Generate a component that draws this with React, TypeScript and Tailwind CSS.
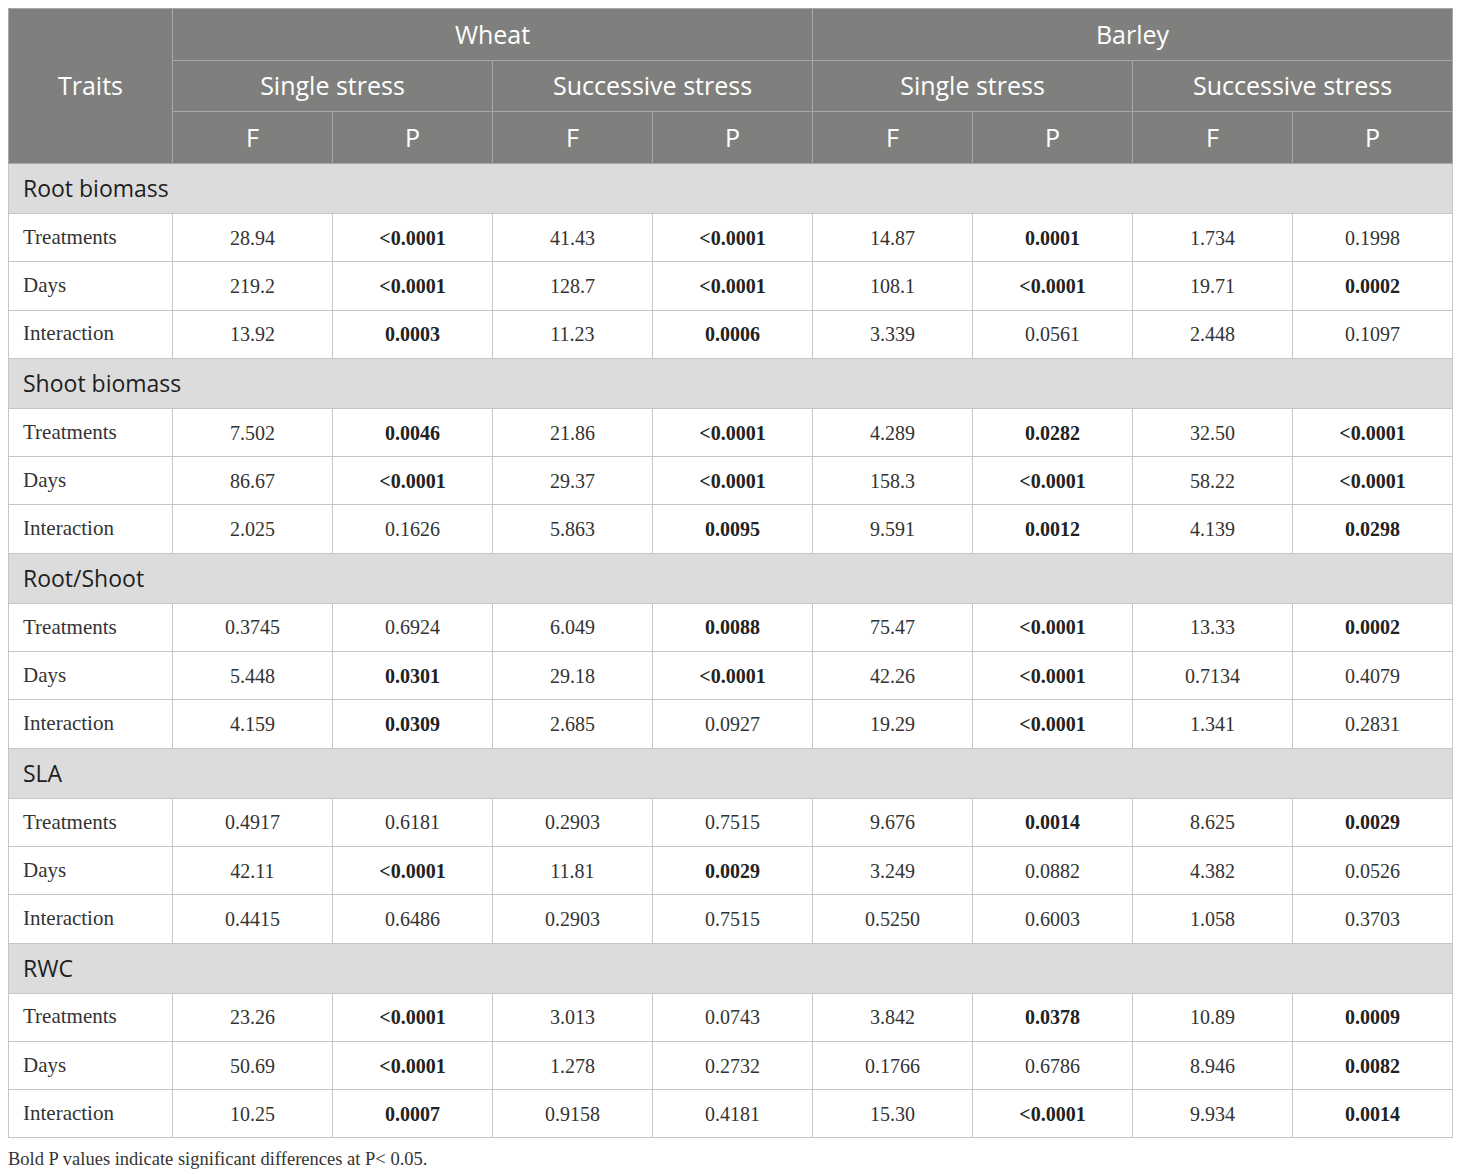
type Row = { label: string; values: string[]; bold: boolean[] };
type Section = { title: string; rows: Row[] };

function mk(label: string, raw: string[]): Row {
  return {
    label,
    values: raw.map((v) => v.replace('*', '')),
    bold: raw.map((v) => v.startsWith('*')),
  };
}

const sections: Section[] = [
  {
    title: 'Root biomass',
    rows: [
      mk('Treatments', ['28.94', '*<0.0001', '41.43', '*<0.0001', '14.87', '*0.0001', '1.734', '0.1998']),
      mk('Days', ['219.2', '*<0.0001', '128.7', '*<0.0001', '108.1', '*<0.0001', '19.71', '*0.0002']),
      mk('Interaction', ['13.92', '*0.0003', '11.23', '*0.0006', '3.339', '0.0561', '2.448', '0.1097']),
    ],
  },
  {
    title: 'Shoot biomass',
    rows: [
      mk('Treatments', ['7.502', '*0.0046', '21.86', '*<0.0001', '4.289', '*0.0282', '32.50', '*<0.0001']),
      mk('Days', ['86.67', '*<0.0001', '29.37', '*<0.0001', '158.3', '*<0.0001', '58.22', '*<0.0001']),
      mk('Interaction', ['2.025', '0.1626', '5.863', '*0.0095', '9.591', '*0.0012', '4.139', '*0.0298']),
    ],
  },
  {
    title: 'Root/Shoot',
    rows: [
      mk('Treatments', ['0.3745', '0.6924', '6.049', '*0.0088', '75.47', '*<0.0001', '13.33', '*0.0002']),
      mk('Days', ['5.448', '*0.0301', '29.18', '*<0.0001', '42.26', '*<0.0001', '0.7134', '0.4079']),
      mk('Interaction', ['4.159', '*0.0309', '2.685', '0.0927', '19.29', '*<0.0001', '1.341', '0.2831']),
    ],
  },
  {
    title: 'SLA',
    rows: [
      mk('Treatments', ['0.4917', '0.6181', '0.2903', '0.7515', '9.676', '*0.0014', '8.625', '*0.0029']),
      mk('Days', ['42.11', '*<0.0001', '11.81', '*0.0029', '3.249', '0.0882', '4.382', '0.0526']),
      mk('Interaction', ['0.4415', '0.6486', '0.2903', '0.7515', '0.5250', '0.6003', '1.058', '0.3703']),
    ],
  },
  {
    title: 'RWC',
    rows: [
      mk('Treatments', ['23.26', '*<0.0001', '3.013', '0.0743', '3.842', '*0.0378', '10.89', '*0.0009']),
      mk('Days', ['50.69', '*<0.0001', '1.278', '0.2732', '0.1766', '0.6786', '8.946', '*0.0082']),
      mk('Interaction', ['10.25', '*0.0007', '0.9158', '0.4181', '15.30', '*<0.0001', '9.934', '*0.0014']),
    ],
  },
];

const hd = 'border border-[#a9aaa8] font-normal text-white text-center';

export default function App() {
  return (
    <div className="bg-white w-[1460px] min-h-[1174px] pt-[8px] px-[8px]">
      <table
        className="border-collapse table-fixed w-[1444px] text-[#222]"
        style={{ fontFamily: '"Open Sans", sans-serif' }}
      >
        <colgroup>
          <col className="w-[164px]" />
          {Array.from({ length: 8 }).map((_, i) => (
            <col key={i} className="w-[160px]" />
          ))}
        </colgroup>
        <thead className="bg-[#7f807e] text-[25px]">
          <tr className="h-[52px]">
            <th rowSpan={3} className={hd}>Traits</th>
            <th colSpan={4} className={hd}>Wheat</th>
            <th colSpan={4} className={hd}>Barley</th>
          </tr>
          <tr className="h-[51px]">
            <th className={hd} colSpan={2}>Single stress</th>
            <th className={hd} colSpan={2}>Successive stress</th>
            <th className={hd} colSpan={2}>Single stress</th>
            <th className={hd} colSpan={2}>Successive stress</th>
          </tr>
          <tr className="h-[52px]">
            {['F', 'P', 'F', 'P', 'F', 'P', 'F', 'P'].map((h, i) => (
              <th key={i} className={hd}>{h}</th>
            ))}
          </tr>
        </thead>
        <tbody>
          {sections.map((s) => (
            <>
              <tr key={s.title} className="h-[50px] bg-[#dcdcdc]">
                <td colSpan={9} className="border border-[#c6c6c6] pl-[14px] text-[23px] text-[#1e1e1e]">
                  {s.title}
                </td>
              </tr>
              {s.rows.map((r) => (
                <tr
                  key={s.title + r.label}
                  className="h-[48.3px] text-[20px] text-[#333]"
                  style={{ fontFamily: '"Liberation Serif", serif' }}
                >
                  <td className="border border-[#c6c6c6] pl-[14px] text-[21px]">{r.label}</td>
                  {r.values.map((v, i) => (
                    <td
                      key={i}
                      className={`border border-[#c6c6c6] text-center ${r.bold[i] ? 'font-bold text-[#222]' : ''}`}
                    >
                      {v}
                    </td>
                  ))}
                </tr>
              ))}
            </>
          ))}
        </tbody>
      </table>
      <p
        className="mt-[8px] text-[18.5px] text-[#333]"
        style={{ fontFamily: '"Liberation Serif", serif' }}
      >
        Bold P values indicate significant differences at P&lt; 0.05.
      </p>
    </div>
  );
}
